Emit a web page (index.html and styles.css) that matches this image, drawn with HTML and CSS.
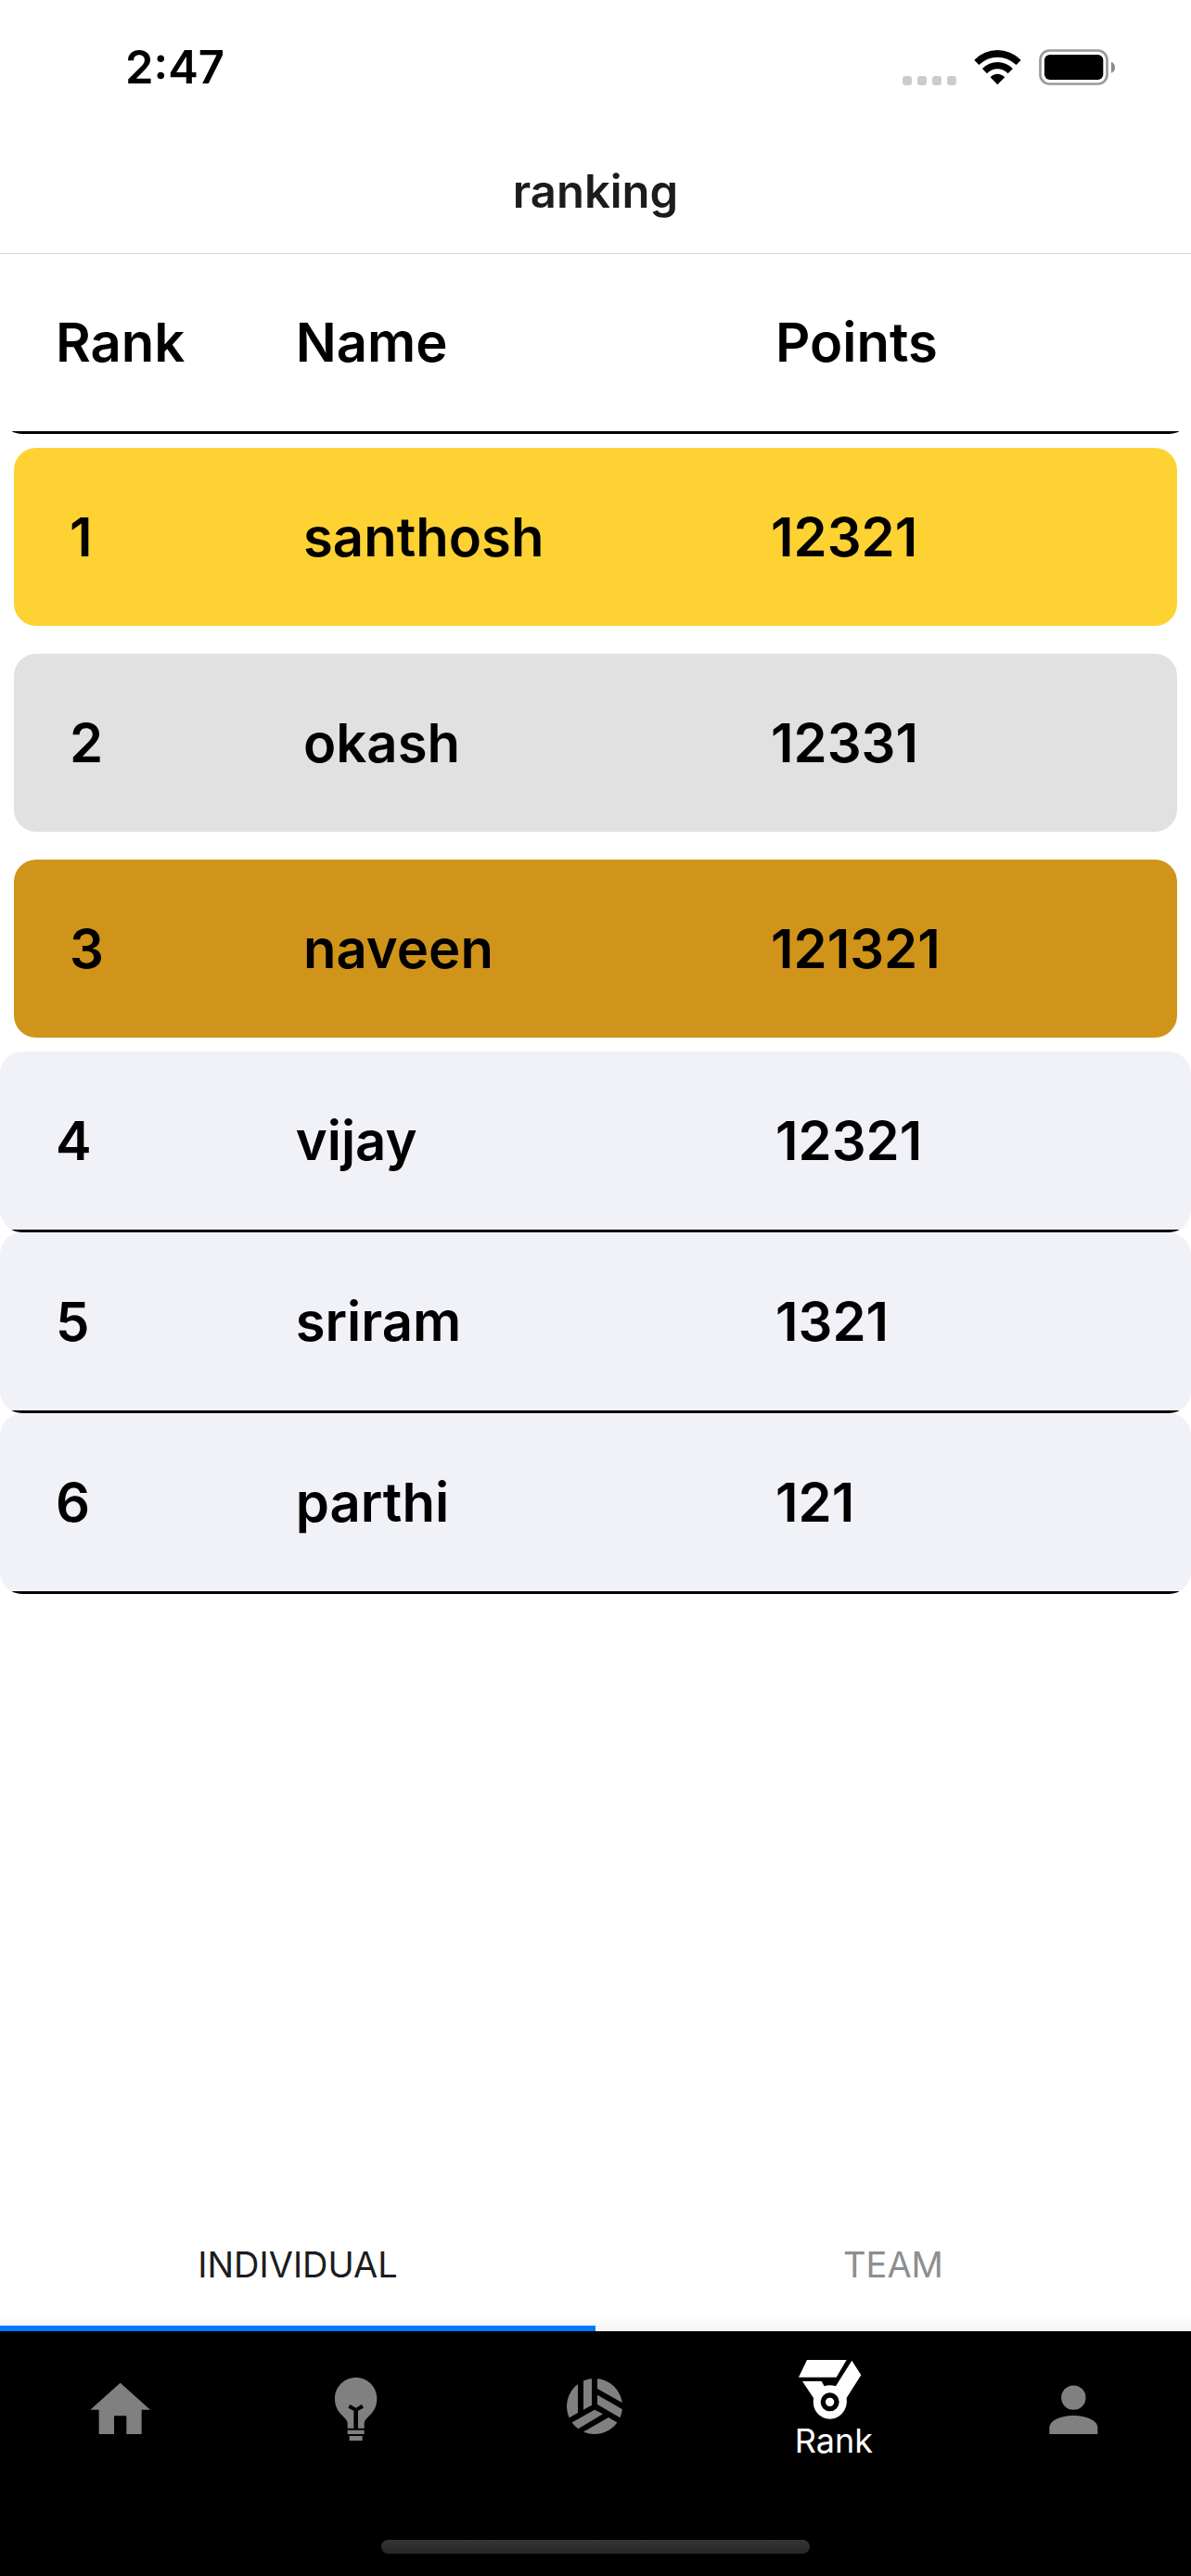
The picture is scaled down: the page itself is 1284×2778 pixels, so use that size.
FILE: index.html
```html
<!DOCTYPE html>
<html lang="en">
<head>
<meta charset="utf-8">
<meta name="viewport" content="width=device-width, initial-scale=1">
<title>ranking</title>
<link rel="stylesheet" href="styles.css">
</head>
<body>
<div class="app">
  <div class="status">
    <time class="clock">2:47</time>
    <div class="indicators">
      <svg class="signal" viewBox="0 0 58 10" aria-hidden="true">
        <rect width="10" height="10" rx="3"/><rect x="16" width="10" height="10" rx="3"/><rect x="32" width="10" height="10" rx="3"/><rect x="48" width="10" height="10" rx="3"/>
      </svg>
      <svg class="wifi" viewBox="330 68 153 117" aria-hidden="true">
        <path d="M331 103Q363 71 406 71T482 103L467 119Q440 94 406 94T346 119Z"/>
        <path d="M357 131Q378 110 406 110T456 131L440 147Q425 132 406 132T372 147Z"/>
        <path d="M383 159Q393 148 406 148T430 159L406 183Z"/>
      </svg>
      <svg class="battery" viewBox="540 68 246 117" aria-hidden="true">
        <rect x="544.500" y="72.500" width="216" height="108" rx="30" fill="none" stroke="#999" stroke-width="8"/>
        <rect x="558" y="86" width="190" height="81" rx="17"/>
        <path d="M774 109Q786 114 786 127T774 145Z" fill="#8a8a8a"/>
      </svg>
    </div>
  </div>
  <header class="header"><h1 class="title">ranking</h1></header>

  <main class="content">
    <table class="board">
      <thead>
        <tr class="row row-head"><th scope="col">Rank</th><th scope="col">Name</th><th scope="col">Points</th></tr>
      </thead>
      <tbody>
        <tr class="row medal gold"><td>1</td><td>santhosh</td><td>12321</td></tr>
        <tr class="row medal silver"><td>2</td><td>okash</td><td>12331</td></tr>
        <tr class="row medal bronze"><td>3</td><td>naveen</td><td>121321</td></tr>
        <tr class="row plain"><td>4</td><td>vijay</td><td>12321</td></tr>
        <tr class="row plain"><td>5</td><td>sriram</td><td>1321</td></tr>
        <tr class="row plain"><td>6</td><td>parthi</td><td>121</td></tr>
      </tbody>
    </table>
  </main>

  <div class="tabs" role="tablist">
    <button class="tab tab-active" type="button" role="tab" aria-selected="true">INDIVIDUAL</button>
    <button class="tab" type="button" role="tab" aria-selected="false">TEAM</button>
  </div>

  <footer class="footer">
    <nav class="nav">
      <a class="nav-item" href="#home" aria-label="Home">
        <svg class="icon" viewBox="85 72 240 240" aria-hidden="true"><path d="M210 119 307 206H279V285H230V226H190V285H141V206H113Z"/></svg>
      </a>
      <a class="nav-item" href="#ideas" aria-label="Ideas">
        <svg class="icon" viewBox="856 72 240 240" aria-hidden="true">
          <path d="M972 102C1010 102 1040 132 1040 170C1040 194 1031 209 1018 223C1006 236 999 241 999 251V266H979V209L997 200 991 189 972 200 953 189 947 200 965 209V266H945V251C945 241 938 236 926 223C913 209 904 194 904 170C904 132 934 102 972 102Z"/>
          <path d="M945 272H999V285H945ZM951 291H993V306H951Z"/>
        </svg>
      </a>
      <a class="nav-item" href="#games" aria-label="Games">
        <svg class="icon" viewBox="126 102 240 240" aria-hidden="true">
          <clipPath id="ball"><circle cx="243" cy="225" r="90"/></clipPath>
          <g clip-path="url(#ball)">
            <path d="M150 130H189V246L150 268Z"/>
            <path d="M207 130H234V221L207 236Z"/>
            <path d="M252 130H340V218L252 168Z"/>
            <path d="M252 188 340 239V270L252 219Z"/>
            <path d="M243 236 270 250 180 304 160 283Z"/>
            <path d="M288 261 325 283V320H186Z"/>
          </g>
        </svg>
      </a>
      <a class="nav-item nav-active" href="#rank" aria-current="page">
        <svg class="icon" viewBox="117 33 240 240" aria-hidden="true">
          <path d="M150 75H278L245 131H123Z"/>
          <path fill-rule="evenodd" d="M295 77 325 124 278 198Q282 229 263 249Q247 266 224 266T185 249Q167 230 171 198L135 144H197L206 160Q224 154 243 160ZM224 181A30 30 0 1 0 224 241A30 30 0 1 0 224 181Z"/>
          <circle cx="224" cy="211" r="14"/>
        </svg>
        <span class="nav-label">Rank</span>
      </a>
      <a class="nav-item" href="#profile" aria-label="Profile">
        <svg class="icon" viewBox="107 72 240 240" aria-hidden="true"><circle cx="231" cy="167" r="39.500"/><path d="M153 285V264C153 240 192 225 231 225S309 240 309 264V285Z"/></svg>
      </a>
    </nav>
    <div class="home-indicator"></div>
  </footer>
</div>
</body>
</html>
```
FILE: styles.css
```css
* {
  box-sizing: border-box;
}

body {
  margin: 0;
  background: #fff;
  color: #000;
  font-family: Inter, "Liberation Sans", sans-serif;
}

.app {
  display: flex;
  flex-direction: column;
  min-height: 100vh;
}

.status {
  display: flex;
  align-items: center;
  justify-content: space-between;
  height: 141px;
  padding: 4px 82px 0 135px;
}

.clock {
  font-size: 49px;
  font-weight: 600;
  line-height: 60px;
}

.indicators {
  display: flex;
  align-items: flex-end;
  gap: 19px;
}

.signal {
  width: 58px;
  height: 10px;
  fill: #ccc;
}

.wifi {
  width: 51px;
  height: 39px;
}

.battery {
  width: 82px;
  height: 39px;
}

.header {
  position: relative;
  display: flex;
  align-items: center;
  justify-content: center;
  height: 132px;
  box-shadow: 0 1px 0 #d8d8d8;
}

.title {
  margin: 0;
  color: #1c1c1e;
  font-size: 49px;
  font-weight: 600;
  line-height: 60px;
}

.content {
  flex: 1;
}

.board,
.board thead,
.board tbody {
  display: block;
}

.row {
  display: grid;
  grid-template-columns: 2fr 4fr 3fr;
  padding: 60px;
  border-radius: 24px;
  font-size: 58px;
  font-weight: 600;
  line-height: 72px;
}

.row th,
.row td {
  padding: 0;
  font-weight: inherit;
  text-align: left;
}

/* The rule is a background strip so the rounded corners clip its ends. */
.row-head,
.plain {
  padding-bottom: 63px;
  background: linear-gradient(#000, #000) bottom / 100% 3px no-repeat;
}

.plain {
  background-color: #f1f2f8;
}

.medal {
  margin: 15px;
}

.medal + .medal {
  margin-top: 30px;
}

.gold {
  background: #ffd233;
}

.silver {
  background: #e1e1e1;
}

.bronze {
  background: #d1941a;
}

.tabs {
  display: flex;
  background: linear-gradient(to top, #f3f3f3, #fff 18px);
}

.tab {
  flex: 1;
  height: 144px;
  padding: 6px 0 0;
  border: 0;
  border-bottom: 6px solid transparent;
  background: none;
  color: #8e8e8f;
  font-family: inherit;
  font-size: 38px;
  line-height: 48px;
}

.tab-active {
  border-color: #007aff;
  color: #1c1c1e;
}

.footer {
  display: flex;
  flex-direction: column;
  align-items: center;
  gap: 75px;
  padding-bottom: 24px;
  background: #000;
}

.nav {
  display: flex;
  width: 100%;
  height: 150px;
}

.nav-item {
  display: flex;
  flex: 1;
  flex-direction: column;
  align-items: center;
  padding-top: 40px;
  color: #808080;
  text-decoration: none;
}

.nav-active {
  padding-top: 17px;
  color: #fff;
}

.icon {
  width: 80px;
  height: 80px;
  fill: currentColor;
}

.nav-label {
  font-size: 36px;
  line-height: 42px;
}

.home-indicator {
  width: 36%;
  height: 15px;
  border-radius: 8px;
  background: linear-gradient(#363636, #262626);
}
```
